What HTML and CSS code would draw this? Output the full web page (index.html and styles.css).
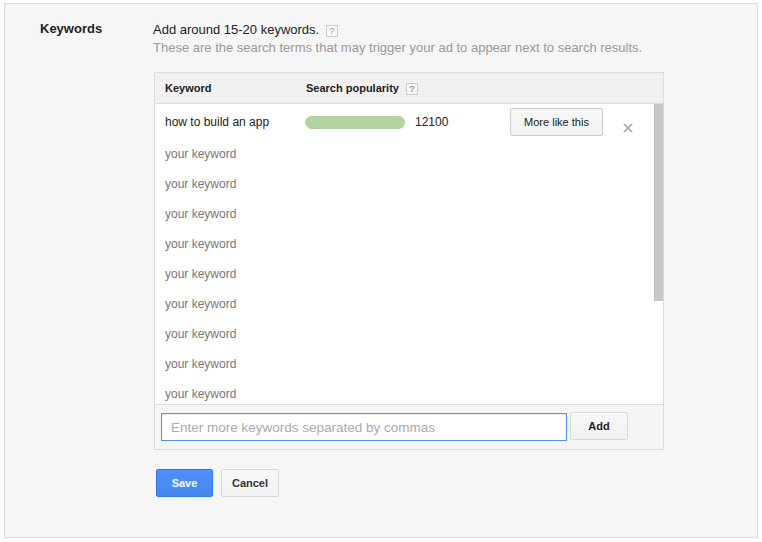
FILE: index.html
```html
<!DOCTYPE html>
<html>
<head>
<meta charset="utf-8">
<link rel="stylesheet" href="styles.css">
</head>
<body>
<div class="panel">
  <div class="label">Keywords</div>
  <div class="content">
    <div class="intro">Add around 15-20 keywords. <span class="help">?</span></div>
    <div class="sub">These are the search terms that may trigger your ad to appear next to search results.</div>
    <div class="table">
      <div class="thead">
        <div class="col-kw">Keyword</div>
        <div class="col-pop">Search popularity <span class="help">?</span></div>
      </div>
      <div class="list">
        <div class="row first">
          <div class="col-kw">how to build an app</div>
          <div class="bar"></div>
          <div class="num">12100</div>
          <button class="btn more">More like this</button>
          <svg class="close" width="10" height="10" viewBox="0 0 10 10"><path d="M1 1L9 9M9 1L1 9" stroke="#b3b3b3" stroke-width="2"/></svg>
        </div>
        <div class="row ph">your keyword</div>
        <div class="row ph">your keyword</div>
        <div class="row ph">your keyword</div>
        <div class="row ph">your keyword</div>
        <div class="row ph">your keyword</div>
        <div class="row ph">your keyword</div>
        <div class="row ph">your keyword</div>
        <div class="row ph">your keyword</div>
        <div class="row ph last">your keyword</div>
        <div class="thumb"></div>
      </div>
      <div class="tfoot">
        <input class="kw-input" type="text" placeholder="Enter more keywords separated by commas">
        <button class="btn add">Add</button>
      </div>
    </div>
    <div class="actions">
      <button class="btn save">Save</button>
      <button class="btn cancel">Cancel</button>
    </div>
  </div>
</div>
</body>
</html>
```

FILE: styles.css
```css
* { box-sizing: border-box; }
html, body { margin: 0; padding: 0; background: #fff; }
body { font-family: "Liberation Sans", Arial, sans-serif; color: #222; }

.panel {
  margin: 3px 4px 4px 4px;
  width: 754px;
  height: 535px;
  border: 1px solid #dcdcdc;
  background: #f6f6f6;
  display: flex;
  padding: 16px 0 0 35px;
}
.label {
  width: 113px;
  font-size: 13px;
  font-weight: bold;
  line-height: 18px;
}
.content { width: 512px; }
.intro { font-size: 13px; line-height: 18px; color: #222; padding-top: 1px; }
.sub { font-size: 13px; line-height: 18px; color: #999; white-space: nowrap; }
.help {
  display: inline-block;
  width: 12px;
  height: 12px;
  border: 1px solid #ccc;
  background: #f8f8f8;
  color: #999;
  font-size: 9px;
  line-height: 10px;
  text-align: center;
  margin-left: 3px;
}

.table {
  margin: 15px 0 0 1px;
  width: 510px;
  border: 1px solid #dcdcdc;
  background: #fff;
}
.thead {
  height: 31px;
  background: #f1f1f1;
  border-bottom: 1px solid #dcdcdc;
  display: flex;
  align-items: center;
  padding-left: 10px;
  font-size: 11px;
  font-weight: bold;
  color: #222;
}
.col-kw { width: 140px; flex: none; }
.thead .col-pop { margin-left: 1px; }
.thead .help { margin-left: 4px; }

.list {
  position: relative;
  height: 300px;
  overflow: hidden;
  background: #fff;
  padding-right: 9px;
}
.thumb {
  position: absolute;
  top: 0;
  right: 0;
  width: 9px;
  height: 197px;
  background: #c8c8c8;
  border-left: 1px solid #bdbdbd;
}

.row {
  height: 30px;
  display: flex;
  align-items: center;
  padding-left: 10px;
  font-size: 12px;
}
.row.first { height: 35px; padding-top: 1px; color: #222; }
.row.ph { color: #777; }
.row.last { height: 25px; align-items: flex-start; padding-top: 8px; }
.bar {
  width: 100px;
  height: 13px;
  border-radius: 7px;
  background: #b2d3a1;
  flex: none;
}
.num { width: 105px; padding-left: 10px; flex: none; }
.btn {
  font-family: "Liberation Sans", Arial, sans-serif;
  font-size: 11px;
  height: 28px;
  border: 1px solid #d9d9d9;
  background: linear-gradient(#f8f8f8, #f1f1f1);
  color: #333;
  border-radius: 2px;
  padding: 0;
  cursor: default;
}
.more { width: 93px; color: #222; border-color: #ccc; }
.close { margin-left: 20px; margin-top: 12px; }

.tfoot {
  border-top: 1px solid #dcdcdc;
  background: #f5f5f5;
  height: 45px;
  display: flex;
  align-items: flex-start;
  padding: 7px 0 0 6px;
}
.kw-input {
  width: 406px;
  height: 28px;
  border: 1px solid #4d90fe;
  box-shadow: inset 0 1px 2px rgba(0,0,0,0.1);
  padding: 0 0 0 9px;
  font-family: "Liberation Sans", Arial, sans-serif;
  font-size: 13.5px;
  outline: none;
  margin: 1px 0 0 0;
}
.kw-input::placeholder { color: #aaa; }
.add { width: 58px; margin-left: 3px; font-weight: bold; color: #222; }

.actions { margin: 19px 0 0 3px; display: flex; gap: 8px; }
.save {
  width: 57px;
  background: linear-gradient(#4d90fe, #4787ed);
  border-color: #3079ed;
  color: #fff;
  font-weight: bold;
}
.cancel { width: 58px; font-weight: bold; color: #333; }
```
